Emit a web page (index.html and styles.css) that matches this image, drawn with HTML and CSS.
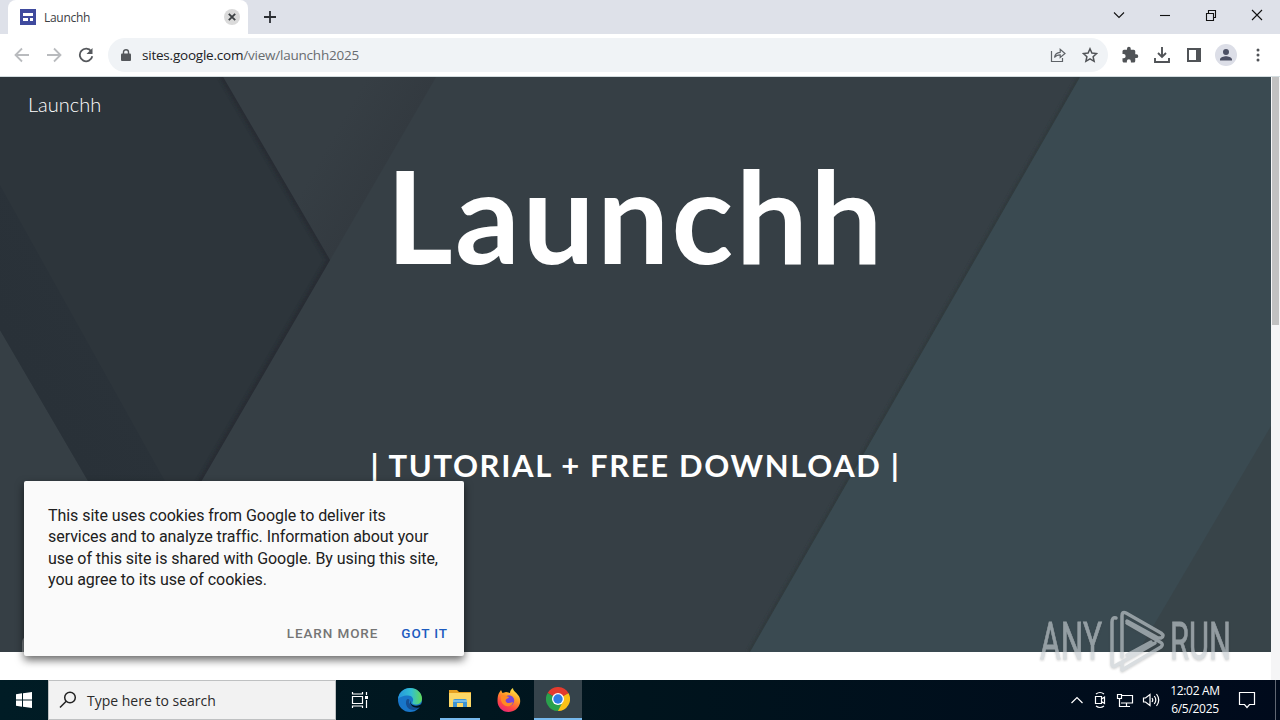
FILE: index.html
```html
<!DOCTYPE html>
<html lang="en">
<head>
<meta charset="utf-8">
<title>Launchh</title>
<link rel="stylesheet" href="styles.css">
</head>
<body>
  <div class="tabstrip">
    <div class="tab">
      <svg class="favicon" width="16" height="16" viewBox="0 0 16 16">
        <path fill="#3f4a9e" d="M0 0h16v16H0z"/>
        <path fill="#fff" d="M3 4h10v3H3zM3 9h5v3H3zM10 9h3v3h-3z"/>
      </svg>
      <span class="tab_title">Launchh</span>
      <svg width="16" height="16" viewBox="0 0 16 16">
        <circle cx="8" cy="8" r="8" fill="#dadada"/>
        <path d="M4.800 4.800l6.400 6.400M11.200 4.800l-6.400 6.400" stroke="#3c4043" stroke-width="1.800"/>
      </svg>
    </div>
    <svg class="new_tab" width="14" height="14" viewBox="0 0 14 14">
      <path d="M7 1v12M1 7h12" stroke="#2b2e33" stroke-width="1.800"/>
    </svg>
    <div class="window_buttons">
      <svg width="12" height="12" viewBox="0 0 12 12"><path d="M1 3.500l5 5 5-5"/></svg>
      <svg width="12" height="12" viewBox="0 0 12 12"><path d="M1 6.500h10"/></svg>
      <svg width="12" height="12" viewBox="0 0 12 12"><path d="M1.500 4.500h7v7h-7zM3.500 4V1.500h7v7H9"/></svg>
      <svg width="12" height="12" viewBox="0 0 12 12"><path d="M1 1l10 10M11 1L1 11"/></svg>
    </div>
  </div>

  <div class="toolbar">
    <div class="nav">
      <svg width="16" height="16" viewBox="0 0 16 16" stroke="#b9bbbe"><path d="M15 8H2M8 1.500L1.500 8 8 14.500"/></svg>
      <svg width="16" height="16" viewBox="0 0 16 16" stroke="#b9bbbe"><path d="M1 8h13M8 1.500L14.500 8 8 14.500"/></svg>
      <svg width="16" height="16" viewBox="0 0 16 16" stroke="#55585c"><path d="M13.300 4.400A6.300 6.300 0 1 0 14.300 9.300"/><path d="M14.500 1v6h-6z" fill="#55585c" stroke="none"/></svg>
    </div>
    <div class="omnibox">
      <svg width="10" height="12" viewBox="0 0 10 12">
        <path fill="#54575b" d="M1 4.500h8q1 0 1 1V11q0 1-1 1H1q-1 0-1-1V5.500q0-1 1-1z"/>
        <path fill="none" stroke="#54575b" stroke-width="1.400" d="M2.500 5V3a2.500 2.300 0 0 1 5 0v2"/>
      </svg>
      <span class="url"><span class="host">sites.google.com</span><span class="path">/view/launchh2025</span></span>
      <svg class="share" width="16" height="16" viewBox="0 0 16 16" fill="none" stroke="#5f6368" stroke-width="1.200">
        <path d="M1.500 4v10.500h11V11"/><path d="M4.500 10.500C5 7 7 5.500 10.200 5.300V2.300L15 6.500l-4.800 4V7.800C7.500 7.800 6 8.500 4.500 10.500z"/>
      </svg>
      <svg width="16" height="16" viewBox="0 0 16 16" fill="none" stroke="#505357" stroke-width="1.500">
        <path d="M8 1.800l1.900 4.300 4.700.5-3.500 3.100 1 4.600L8 11.900l-4.100 2.400 1-4.600-3.500-3.100 4.700-.5z"/>
      </svg>
    </div>
    <div class="actions">
      <svg width="18" height="18" viewBox="0 0 24 24" fill="#505357"><path d="M20.500 11H19V7a2 2 0 0 0-2-2h-4V3.500a2.500 2.500 0 0 0-5 0V5H4a2 2 0 0 0-2 2v3.800h1.500a2.700 2.700 0 0 1 0 5.400H2V20c0 1.100.9 2 2 2h3.800v-1.500a2.700 2.700 0 0 1 5.400 0V22H17a2 2 0 0 0 2-2v-4h1.500a2.500 2.500 0 0 0 0-5z"/></svg>
      <svg width="18" height="18" viewBox="0 0 18 18" fill="none" stroke="#505357" stroke-width="1.900"><path d="M9 1v9.500M5 7l4 4 4-4M2 12v4h14v-4"/></svg>
      <svg width="18" height="18" viewBox="0 0 18 18"><path fill="none" stroke="#505357" stroke-width="2" d="M3 3h12v12H3z"/><path fill="#505357" d="M11 3h4v12h-4z"/></svg>
      <svg width="22" height="22" viewBox="0 0 22 22"><circle cx="11" cy="11" r="11" fill="#dcdee7"/><path fill="#4c5064" d="M11 5a3 3 0 1 1 0 6 3 3 0 0 1 0-6zM5 16.500v-1.200c0-2 4-3.100 6-3.100s6 1.100 6 3.100v1.200z"/></svg>
      <svg width="4" height="16" viewBox="0 0 4 16" fill="#505357"><circle cx="2" cy="3" r="1.500"/><circle cx="2" cy="8" r="1.500"/><circle cx="2" cy="13" r="1.500"/></svg>
    </div>
  </div>

  <div class="viewport">
    <div class="page">
      <div class="hero">
        <svg class="hero_art" width="1271" height="575" viewBox="0 77 1271 575">
          <defs>
            <linearGradient id="fold" gradientUnits="userSpaceOnUse" x1="330" y1="140" x2="384" y2="171">
              <stop offset="0" stop-color="#333a40" stop-opacity="0"/>
              <stop offset="1" stop-color="#333a40"/>
            </linearGradient>
            <linearGradient id="band" gradientUnits="userSpaceOnUse" x1="44" y1="408" x2="132" y2="359">
              <stop offset="0" stop-color="#293138"/>
              <stop offset=".8" stop-color="#2a3239"/>
              <stop offset="1" stop-color="#2c343a"/>
            </linearGradient>
            <filter id="soft"><feGaussianBlur stdDeviation="1.500"/></filter>
            <clipPath id="sheet"><path d="M0 77h223l107 183-228 392H0z"/></clipPath>
          </defs>
          <path fill="#363f45" d="M0 77h1271v575H0z"/>
          <path fill="#363e44" d="M222 77h214L330 260z"/>
          <path fill="url(#fold)" d="M222 77h214L330 260z"/>
          <path fill="#2d353b" d="M0 77h223l107 183-228 392H188L0 330z"/>
          <path fill="url(#band)" d="M0 185l165 296v60h-42L0 330z"/>
          <path fill="none" stroke="#252c32" stroke-width="7" opacity=".8" filter="url(#soft)" clip-path="url(#sheet)" d="M223 77l107 183-228 392"/>
          <path fill="none" stroke="#2f373b" stroke-width="3" filter="url(#soft)" d="M1079 77L749 652"/>
          <path fill="#3a4a51" d="M1080 77h191v575H750z"/>
          <path fill="#384449" d="M1271 426v226h-133z"/>
        </svg>
        <div class="site_name">Launchh</div>
        <h1>Launchh</h1>
        <h2>| TUTORIAL + FREE DOWNLOAD |</h2>
      </div>
    </div>
    <div class="scrollbar"><div class="thumb"></div></div>
    <div class="info_button"></div>

    <div class="cookies">
      <p>This site uses cookies from Google to deliver its<br>services and to analyze traffic. Information about your<br>use of this site is shared with Google. By using this site,<br>you agree to its use of cookies.</p>
      <div class="cookie_links">
        <a class="learn">LEARN MORE</a>
        <a class="got_it">GOT IT</a>
      </div>
    </div>

    <svg class="watermark" width="220" height="74" viewBox="1030 603 220 74">
      <g fill="#c5ccd0" stroke="#c5ccd0">
        <text x="1040" y="659" textLength="62" lengthAdjust="spacingAndGlyphs">ANY</text>
        <text x="1170" y="659" textLength="61" lengthAdjust="spacingAndGlyphs">RUN</text>
      </g>
      <g fill="none" stroke="#c5ccd0" stroke-width="3.500" stroke-linejoin="round" stroke-linecap="round">
        <path d="M1116 618q-4-1-4 4v42q0 3 3 2l5-3"/>
        <path d="M1122 657v-41q0-5 4-3l35 20q4 3 0 5h-3l-31-17"/>
        <path d="M1127 655l24-13M1122 662v8l39-23q3-3-1-5l-33-19M1155 643l-33 19"/>
      </g>
    </svg>
  </div>

  <div class="taskbar">
    <div class="start">
      <svg width="16" height="16" viewBox="0 0 16 16" fill="#fff"><path d="M0 2.200l6-.9v6.200H0zM7 1.200L16 0v7.500H7zM0 8.500h6v6.200l-6-.9zM7 8.500h9V16l-9-1.200z"/></svg>
    </div>
    <div class="search">
      <svg width="18" height="18" viewBox="0 0 18 18" fill="none" stroke="#222" stroke-width="1.500"><circle cx="11" cy="6.500" r="5.300"/><path d="M7.200 10.300L1 16.500"/></svg>
      <span>Type here to search</span>
    </div>
    <div class="apps">
      <div class="app">
        <svg width="18" height="18" viewBox="0 0 18 18" fill="none" stroke="#fff" stroke-width="1.200"><path d="M1.500 5.500h10v7h-10zM1.500 1v2h10V1M1.500 17v-2h10v2M15.500 1v3M15.500 9v8"/><path fill="#fff" stroke="none" d="M14 5h3v3h-3z"/></svg>
      </div>
      <div class="app">
        <svg width="24" height="24" viewBox="0 0 24 24">
          <defs>
            <linearGradient id="edgeTop" x1="0" x2="1"><stop offset="0" stop-color="#2495dc"/><stop offset=".55" stop-color="#32bfd2"/><stop offset="1" stop-color="#62d957"/></linearGradient>
          </defs>
          <circle cx="12" cy="12" r="12" fill="#1876c9"/>
          <path fill="url(#edgeTop)" d="M0 11C1 4 6 0 12 0c7 0 12 5 12 10.500 0 4-3 6-6.500 6-2.500 0-4-1-3-2.500 2-3-.5-6.500-4.500-6.500C5 7.500 1 9.500 0 11z"/>
          <path fill="#154f93" d="M8.500 12c-2 5 1.500 10 7 10 3 0 5.500-2 7-4.500-3 1.500-7 1.500-9.500-.5-2-1.500-2.500-3-1.500-5-1-1.500-2.500-1-3 0z"/>
          <path fill="#00141d" d="M12.500 11.500c-1 3 1 6 5 6.300 3 .2 5-1 6.500-2.800l-1 4c-3 1.200-7 .8-9-1-2-1.600-2.500-4.500-1.500-6.500z"/>
        </svg>
      </div>
      <div class="app running">
        <svg width="22" height="20" viewBox="0 0 22 20">
          <path fill="#e5a021" d="M0 1h8l2 2h12v5H0z"/>
          <path fill="#fcd766" d="M0 4h22v14H0z"/>
          <path fill="#3d93d2" d="M4 18v-6q0-2 2-2h10q2 0 2 2v6h-4v-4H8v4z"/>
          <path fill="#76bdea" d="M4 11h14v2H4z"/>
        </svg>
      </div>
      <div class="app">
        <svg width="24" height="24" viewBox="0 0 24 24">
          <defs>
            <linearGradient id="fox" x1=".8" y1="0" x2=".3" y2="1"><stop offset="0" stop-color="#fff04a"/><stop offset=".4" stop-color="#ff9b27"/><stop offset=".75" stop-color="#ff4545"/><stop offset="1" stop-color="#e72776"/></linearGradient>
          </defs>
          <path fill="url(#fox)" d="M2 5l2-3 1.500 3L9 4c2 0 3 1 4 1 0-2 1-4 3-5 0 3 3 4 5 7 2 2 2.500 5 2 8-1 5-6 9-11.500 9C5 24 .5 19 .5 13 .5 9 1 7 2 5z"/>
          <circle cx="12" cy="12.500" r="5.200" fill="#7645d9"/>
          <path fill="#ff8a22" d="M4 8c3-2 5 0 8 1 0 1-2 1.500-3 2.500C8 13 9 15 12 15c2 0 3-1 4-1-1 4-4 5-7 4-4-1-6-6-5-10z"/>
        </svg>
      </div>
      <div class="app running active">
        <svg width="24" height="24" viewBox="0 0 24 24">
          <path fill="#e33b2e" d="M1.600 6A12 12 0 0 1 22.400 6L12 12z"/>
          <path fill="#fbc116" d="M22.400 6A12 12 0 0 1 12 24l0-12z"/>
          <path fill="#2aa14c" d="M12 24A12 12 0 0 1 1.600 6L12 12l4.700 3z"/>
          <path fill="#e33b2e" d="M12 6h10.400L12 12z"/>
          <path fill="#fbc116" d="M17.500 12L12 24l4-9z"/>
          <circle cx="12" cy="12" r="6" fill="#fff"/><circle cx="12" cy="12" r="4.700" fill="#2f7de4"/>
        </svg>
      </div>
    </div>
    <div class="tray">
      <svg width="14" height="18" viewBox="0 0 14 18"><path d="M1.500 12L7 6.500l5.500 5.500"/></svg>
      <svg width="16" height="18" viewBox="0 0 16 18"><path d="M3.500 5.500h6v7h-6zM9.500 8l3-2v6.500l-3-2M4 3q4-3 8 0M4 15q4 3 8 0"/></svg>
      <svg width="18" height="18" viewBox="0 0 18 18"><path d="M6 4.500h10.500v7.500H5M10.500 12v3.500M7 15.500h7M1.500 3.500h4v4h-4zM3.500 7.500V15.500H7"/></svg>
      <svg width="18" height="18" viewBox="0 0 18 18"><path d="M1.500 7h2L8 3.500v11L3.500 11h-2zM10 7q1.500 2 0 4M12.300 5q3 4 0 8M14.500 3q4.500 6 0 12"/></svg>
      <div class="clock"><div class="time">12:02 AM</div><div class="date">6/5/2025</div></div>
      <svg class="notes" width="18" height="18" viewBox="0 0 18 18"><path d="M1.500 1.500h15v12h-5l-2.500 3-2.500-3h-5z"/></svg>
    </div>
    <div class="show_desktop"></div>
  </div>
</body>
</html>
```
FILE: styles.css
```css
body {
  margin: 0;
  width: 1280px;
  height: 720px;
  display: flex;
  flex-direction: column;
  overflow: hidden;
  background-color: #fff;
  font-family: "Open Sans", sans-serif;
}
svg {
  display: block;
  flex-shrink: 0;
}

/* browser chrome */
.tabstrip {
  height: 34px;
  display: flex;
  align-items: center;
  background-color: #dee1e9;
  padding-left: 8px;
}
.tab {
  box-sizing: border-box;
  width: 240px;
  height: 34px;
  display: flex;
  align-items: center;
  padding: 0 8px 0 12px;
  background-color: #fff;
  border-radius: 8px 8px 0 0;
}
.tab_title {
  flex-grow: 1;
  margin-left: 8px;
  font-size: 12px;
  letter-spacing: -0.3px;
  color: #3c4043;
}
.new_tab { margin-left: 15px; }
.window_buttons {
  display: flex;
  gap: 34px;
  margin-left: auto;
  margin-right: 17px;
  margin-bottom: 5px;
}
.window_buttons path {
  fill: none;
  stroke: #111;
  stroke-width: 1.1;
}
.toolbar {
  height: 42px;
  display: flex;
  align-items: center;
  border-bottom: 1px solid #d3dcdf;
}
.nav {
  display: flex;
  gap: 16px;
  margin: 0 14px;
}
.nav svg {
  fill: none;
  stroke-width: 1.8;
}
.omnibox {
  box-sizing: border-box;
  width: 1000px;
  height: 34px;
  display: flex;
  align-items: center;
  padding: 0 10px 0 13px;
  border-radius: 17px;
  background-color: #f0f3f6;
}
.url {
  flex-grow: 1;
  margin-left: 11px;
  font-size: 13.5px;
  letter-spacing: -0.22px;
}
.host { color: #202124; }
.path { color: #686c70; }
.share { margin-right: 16px; }
.actions {
  display: flex;
  align-items: center;
  gap: 14px;
  margin-left: 13px;
}
.actions svg:nth-child(4) { margin: 0 -2px; }
.actions svg:last-child { margin-left: 7px; }

/* site */
.viewport {
  position: relative;
  height: 603px;
  display: flex;
}
.page { width: 1271px; }
.hero {
  position: relative;
  height: 575px;
  overflow: hidden;
  color: #fff;
  font-family: Lato, sans-serif;
}
.hero_art {
  position: absolute;
  top: 0;
  left: 0;
}
.site_name, h1, h2 {
  position: relative;
  margin: 0;
}
.site_name {
  padding: 15px 28px 0;
  font-size: 20px;
  line-height: 24px;
  font-weight: 300;
}
h1 {
  margin-top: 21px;
  font-size: 128px;
  line-height: 156px;
  font-weight: 700;
  letter-spacing: 2.4px;
  text-align: center;
}
h2 {
  margin-top: 154px;
  font-size: 31px;
  line-height: 37px;
  font-weight: 700;
  letter-spacing: 1.65px;
  text-align: center;
}
.scrollbar {
  box-sizing: border-box;
  width: 9px;
  padding: 0 1px;
  background-color: #f5f5f6;
}
.thumb {
  height: 248px;
  background-color: #c1c1c1;
}
.info_button {
  position: absolute;
  left: 22px;
  top: 557px;
  width: 20px;
  height: 18px;
  border-radius: 9px 0 0 0;
  background-color: #747a7e;
}
.cookies {
  position: absolute;
  left: 24px;
  top: 404px;
  box-sizing: border-box;
  width: 440px;
  height: 175px;
  padding: 24px 16px 0 24px;
  border-radius: 2px;
  background-color: #fafafa;
  box-shadow: 0 4px 8px rgba(0, 0, 0, .6);
  font-family: Roboto, sans-serif;
}
.cookies p {
  margin: 0;
  font-size: 16px;
  line-height: 21.4px;
  letter-spacing: -0.05px;
  color: #202020;
  white-space: nowrap;
}
.cookie_links {
  display: flex;
  justify-content: flex-end;
  gap: 23px;
  margin-top: 32px;
  font-size: 13.5px;
  line-height: 20px;
  font-weight: 500;
  letter-spacing: .9px;
}
.learn { color: #757575; }
.got_it { color: #1d5bbf; }
.watermark {
  position: absolute;
  left: 1030px;
  top: 526px;
  opacity: .65;
  filter: drop-shadow(0 1px 1px rgba(60, 60, 60, .35));
}
.watermark text {
  font-family: Roboto, sans-serif;
  font-size: 51px;
  stroke-width: .8px;
}

/* taskbar */
.taskbar {
  height: 40px;
  display: flex;
  background: linear-gradient(90deg, #001c25, #00141d 50%, #000a1c);
  color: #fff;
}
.start {
  width: 48px;
  display: flex;
  align-items: center;
  justify-content: center;
}
.search {
  box-sizing: border-box;
  width: 288px;
  display: flex;
  align-items: center;
  gap: 10px;
  padding-left: 10px;
  border: 1px solid #bfc1c2;
  background-color: #f2f2f2;
  color: #2b2b2b;
  font-size: 14px;
}
.apps { display: flex; }
.app {
  box-sizing: border-box;
  width: 48px;
  margin-right: 1px;
  display: flex;
  align-items: center;
  justify-content: center;
}
.app:first-child { margin-right: 2px; }
.running {
  width: 40px;
  margin: 0 5px;
  border-bottom: 2px solid #76b9ed;
}
.active {
  width: 48px;
  margin: 0;
  background-color: #35434b;
}
.tray {
  display: flex;
  align-items: center;
  margin-left: auto;
  gap: 8px;
}
.tray path {
  fill: none;
  stroke: #fff;
  stroke-width: 1.2;
}
.clock {
  width: 54px;
  font-size: 12px;
  line-height: 18px;
  letter-spacing: -0.3px;
  text-align: center;
  white-space: nowrap;
}
.notes { margin-left: 8px; }
.show_desktop {
  width: 4px;
  margin-left: 19px;
  border-left: 1px solid #606773;
}
```
